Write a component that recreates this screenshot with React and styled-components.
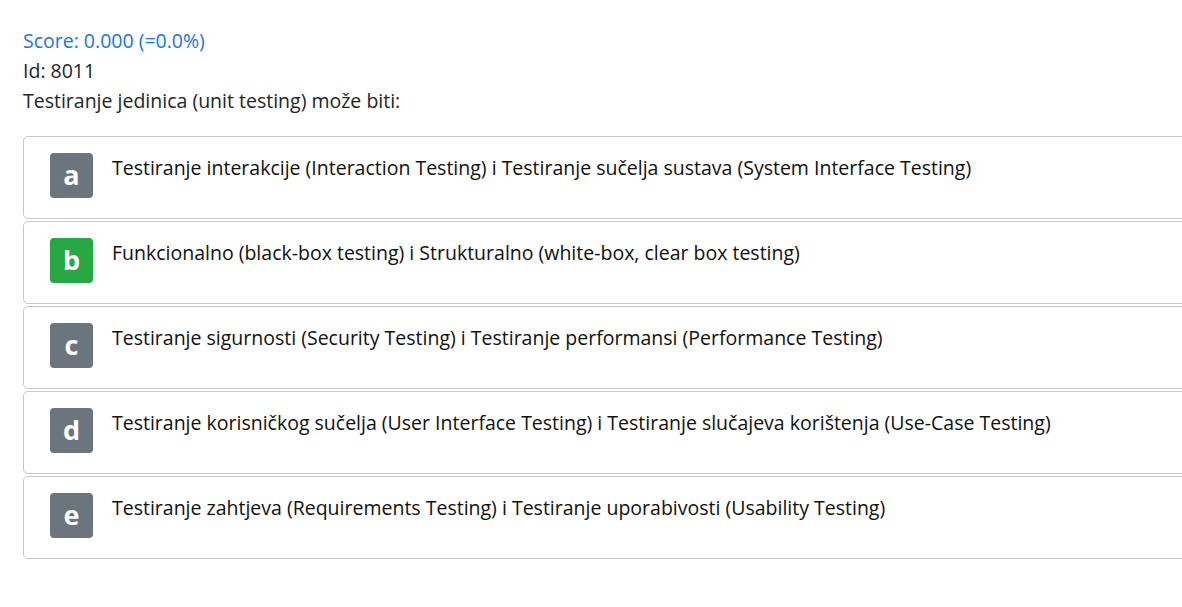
import React from "react"
import styled, { createGlobalStyle } from "styled-components"

const GlobalStyle = createGlobalStyle`
  html, body {
    margin: 0;
    padding: 0;
    background: #ffffff;
    overflow: hidden;
  }
  body {
    font-family: "Open Sans", "Noto Sans", sans-serif;
    color: #212529;
  }
`

const Page = styled.div`
  padding: 26px 0 0 23px;
  width: 1220px;
`

const Meta = styled.div`
  font-size: 19.5px;
  line-height: 30px;
  color: ${(p) => (p.$accent ? "#1a73e8" : "#212529")};
`

const Options = styled.div`
  margin-top: 20px;
  display: flex;
  flex-direction: column;
  gap: 2px;
`

const Option = styled.div`
  display: flex;
  align-items: flex-start;
  height: 83px;
  box-sizing: border-box;
  border: 1px solid #c8c8c8;
  border-radius: 5px;
  padding: 16px 0 0 26px;
`

const Badge = styled.div`
  flex: none;
  width: 43px;
  height: 45px;
  border-radius: 4px;
  background: ${(p) => (p.$correct ? "#28a745" : "#6c757d")};
  color: #ffffff;
  font-weight: 700;
  font-size: 27px;
  display: flex;
  align-items: center;
  justify-content: center;
  padding-bottom: 2px;
  box-sizing: border-box;
`

const Label = styled.div`
  margin-left: 19px;
  font-size: 19.5px;
  line-height: 30px;
  color: #111;
`

const options = [
  ["a", "Testiranje interakcije (Interaction Testing) i Testiranje sučelja sustava (System Interface Testing)"],
  ["b", "Funkcionalno (black-box testing) i Strukturalno (white-box, clear box testing)", true],
  ["c", "Testiranje sigurnosti (Security Testing) i Testiranje performansi (Performance Testing)"],
  ["d", "Testiranje korisničkog sučelja (User Interface Testing) i Testiranje slučajeva korištenja (Use-Case Testing)"],
  ["e", "Testiranje zahtjeva (Requirements Testing) i Testiranje uporabivosti (Usability Testing)"],
]

export default function App() {
  return (
    <Page>
      <GlobalStyle />
      <Meta $accent>Score: 0.000 (=0.0%)</Meta>
      <Meta>Id: 8011</Meta>
      <Meta>Testiranje jedinica (unit testing) može biti:</Meta>
      <Options>
        {options.map(([letter, text, correct]) => (
          <Option key={letter}>
            <Badge $correct={correct}>{letter}</Badge>
            <Label>{text}</Label>
          </Option>
        ))}
      </Options>
    </Page>
  )
}
